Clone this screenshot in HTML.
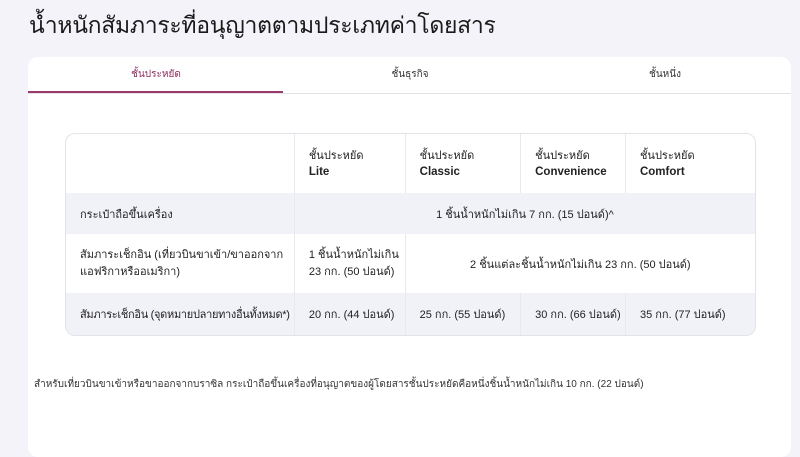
<!DOCTYPE html>
<html><head><meta charset="utf-8"><style>
*{margin:0;padding:0;box-sizing:border-box}
body{width:800px;height:418px;overflow:hidden;background:#f3f3f9;font-family:"Liberation Sans","Noto Sans CJK SC",sans-serif;color:#222;position:relative}
h1{position:absolute;left:29px;top:8px;font-size:23px;font-weight:400;color:#1a1a1a;white-space:nowrap;letter-spacing:-0.3px}
.card{position:absolute;left:28px;top:57px;width:763px;height:400px;background:#fff;border-radius:10px}
.tabs{position:absolute;left:0;top:0;width:763px;height:37px;border-bottom:1px solid #e2e2e8}
.tab{position:absolute;top:10px;font-size:10px;color:#333;transform:translateX(-50%);white-space:nowrap}
.active{color:#8c2a5c}
.ul{position:absolute;left:0;top:34px;width:255px;height:2px;background:#9a3a6a}
table{position:absolute;left:37px;top:76px;width:691px;border-collapse:separate;border-spacing:0;border:1px solid #e3e3ea;border-radius:10px;overflow:hidden;font-size:11px}
td{border-left:1px solid #e8e8ee;padding:0 0 0 14px;vertical-align:middle;white-space:nowrap}
td:first-child{border-left:none;padding-left:14px}
tr.s td{background:#f1f1f8}
.h td{height:59px;line-height:16px}
.h b{font-weight:700;font-size:11.5px}
.c{text-align:center;padding-left:0}
.foot{position:absolute;left:34px;top:377px;font-size:10px;color:#333;white-space:nowrap}
</style></head><body>
<h1>น้ำหนักสัมภาระที่อนุญาตตามประเภทค่าโดยสาร</h1>
<div class="card">
<div class="tabs">
<span class="tab active" style="left:128px">ชั้นประหยัด</span>
<span class="tab" style="left:382px">ชั้นธุรกิจ</span>
<span class="tab" style="left:637px">ชั้นหนึ่ง</span>
<div class="ul"></div>
</div>
<table>
<colgroup><col style="width:228px"><col style="width:111px"><col style="width:116px"><col style="width:105px"><col style="width:131px"></colgroup>
<tr class="h"><td></td><td>ชั้นประหยัด<br><b>Lite</b></td><td>ชั้นประหยัด<br><b>Classic</b></td><td>ชั้นประหยัด<br><b>Convenience</b></td><td>ชั้นประหยัด<br><b>Comfort</b></td></tr>
<tr class="s"><td style="height:41px">กระเป๋าถือขึ้นเครื่อง</td><td colspan="4" class="c">1 ชิ้นน้ำหนักไม่เกิน 7 กก. (15 ปอนด์)^</td></tr>
<tr><td style="height:59px;line-height:17px">สัมภาระเช็กอิน (เที่ยวบินขาเข้า/ขาออกจาก<br>แอฟริกาหรืออเมริกา)</td><td style="line-height:17px">1 ชิ้นน้ำหนักไม่เกิน<br>23 กก. (50 ปอนด์)</td><td colspan="3" class="c">2 ชิ้นแต่ละชิ้นน้ำหนักไม่เกิน 23 กก. (50 ปอนด์)</td></tr>
<tr class="s"><td style="height:42px;letter-spacing:-0.3px">สัมภาระเช็กอิน (จุดหมายปลายทางอื่นทั้งหมด*)</td><td>20 กก. (44 ปอนด์)</td><td>25 กก. (55 ปอนด์)</td><td>30 กก. (66 ปอนด์)</td><td>35 กก. (77 ปอนด์)</td></tr>
</table>
</div>
<div class="foot">สำหรับเที่ยวบินขาเข้าหรือขาออกจากบราซิล กระเป๋าถือขึ้นเครื่องที่อนุญาตของผู้โดยสารชั้นประหยัดคือหนึ่งชิ้นน้ำหนักไม่เกิน 10 กก. (22 ปอนด์)</div>
</body></html>
